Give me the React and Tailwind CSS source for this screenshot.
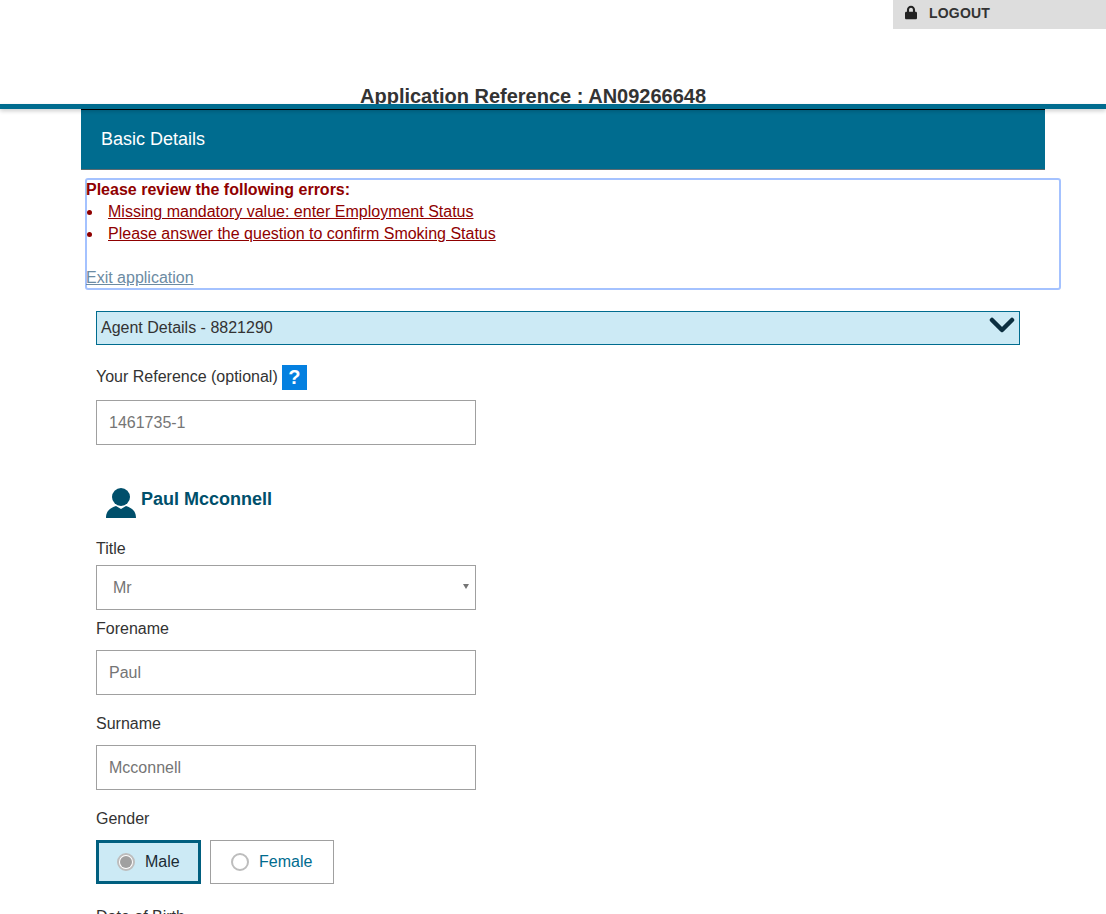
import { FaLock } from 'react-icons/fa';

function Campo({ label, valor, className = '' }) {
  return (
    <div className={className}>
      <label className="block text-base leading-[22px] text-[#333]">{label}</label>
      <input
        readOnly
        value={valor}
        className="mt-[10px] block w-[380px] h-[45px] border border-[#a0a0a0] bg-white px-3 text-base text-[#757575] outline-none"
      />
    </div>
  );
}

function Opcion({ label, activa, className = '' }) {
  return (
    <div
      className={`flex items-center h-[44px] ${className} ${
        activa ? 'border-[3px] border-[#005f7f] bg-[#cceaf5] text-[#1a2a33]' : 'border border-[#a0a0a0] bg-white text-[#006c8f]'
      }`}
    >
      <span className="flex items-center justify-center w-[18px] h-[18px] rounded-full border-2 border-[#bdbdbd] bg-white">
        {activa && <span className="block w-[12px] h-[12px] rounded-full bg-[#a0a0a0]" />}
      </span>
      <span className="ml-[10px] text-base">{label}</span>
    </div>
  );
}

export default function App() {
  const errores = ['Missing mandatory value: enter Employment Status', 'Please answer the question to confirm Smoking Status'];

  return (
    <div className="h-[914px] overflow-hidden bg-white font-['Liberation_Sans',Arial,sans-serif]">
      <header className="h-[104px]">
        <div className="flex justify-end">
          <a className="flex items-center w-[213px] h-[29px] bg-[#dddddd] pb-1 pl-3 text-[#333]">
            <FaLock className="w-[12px] h-[15px] text-[#222]" />
            <span className="ml-3 text-sm font-bold tracking-[0.2px]">LOGOUT</span>
          </a>
        </div>
        <h1 className="mt-[56px] h-[19px] pl-[360px] text-xl leading-[23px] font-bold text-[#333]">
          Application Reference : AN09266648
        </h1>
      </header>
      <div className="relative h-[5px] bg-[#006c8f] shadow-[0_2px_4px_rgba(0,0,0,0.2)]" />

      <section className="ml-[81px] flex items-center w-[964px] h-[61px] bg-[#006c8f] border-t border-t-black border-b border-b-[#5f6b70] pb-[2px] pl-5 text-lg text-white">
        Basic Details
      </section>

      <div className="mt-2 ml-[85px] w-[976px] h-[112px] rounded-[3px] border-2 border-[#a4c2ff] text-base leading-[22px]">
        <div className="-mt-px -ml-px">
          <p className="font-bold text-[#8f0000]">Please review the following errors:</p>
          <ul>
            {errores.map((error) => (
              <li key={error} className="flex items-center text-[#8f0000]">
                <span className="ml-[1px] w-[5px] h-[5px] rounded-full bg-[#8f0000]" />
                <a className="ml-[16px] underline">{error}</a>
              </li>
            ))}
          </ul>
          <a className="block mt-[22px] text-[#6c8ba3] underline">Exit application</a>
        </div>
      </div>

      <main className="ml-[96px]">
        <div className="mt-[21px] flex items-center justify-between w-[924px] h-[34px] border border-[#006c8f] bg-[#cceaf5] pl-1 pr-[4px] text-base text-[#333]">
          <span>Agent Details - 8821290</span>
          <svg className="mb-[6px]" width="26" height="16" viewBox="0 0 26 16" fill="none" stroke="#0c2f40" strokeWidth="4.5" strokeLinecap="round" strokeLinejoin="round">
            <path d="M3 3l10 10L23 3" />
          </svg>
        </div>

        <div className="mt-[20px] flex items-center h-[24px] text-base text-[#333]">
          <span>Your Reference (optional)</span>
          <span className="ml-[4px] flex items-center justify-center w-[25px] h-[25px] bg-[#0480e0] text-xl font-bold text-white">?</span>
        </div>
        <input
          readOnly
          value="1461735-1"
          className="mt-[11px] block w-[380px] h-[45px] border border-[#a0a0a0] px-3 text-base text-[#757575] outline-none"
        />

        <div className="mt-[43px] ml-[10px] flex h-[30px]">
          <svg width="30" height="30" viewBox="0 0 30 30" fill="#004f6b">
            <circle cx="15" cy="9" r="9" />
            <path d="M0 30c0-7 4-10 10-12l5 3 5-3c6 2 10 5 10 12z" />
          </svg>
          <h2 className="ml-[5px] text-lg leading-[22px] font-bold text-[#004f6b]">Paul Mcconnell</h2>
        </div>

        <label className="mt-[20px] block text-base leading-[22px] text-[#333]">Title</label>
        <div className="relative mt-[5px] w-[380px] h-[45px]">
          <select
            defaultValue="Mr"
            className="block w-full h-full appearance-none border border-[#a0a0a0] bg-white pl-[16px] text-base text-[#757575] outline-none"
          >
            <option>Mr</option>
          </select>
          <span className="absolute right-[7px] top-[19px] w-0 h-0 border-x-[3px] border-x-transparent border-t-[5px] border-t-[#757575]" />
        </div>

        <Campo label="Forename" valor="Paul" className="mt-[8px]" />
        <Campo label="Surname" valor="Mcconnell" className="mt-[18px]" />

        <label className="mt-[18px] block text-base leading-[22px] text-[#333]">Gender</label>
        <div className="mt-[10px] flex gap-[9px]">
          <Opcion label="Male" activa className="w-[105px] pl-[18px]" />
          <Opcion label="Female" className="w-[124px] pl-[20px]" />
        </div>

        <label className="mt-[22px] block text-base leading-[22px] text-[#333]">Date of Birth</label>
      </main>
    </div>
  );
}
